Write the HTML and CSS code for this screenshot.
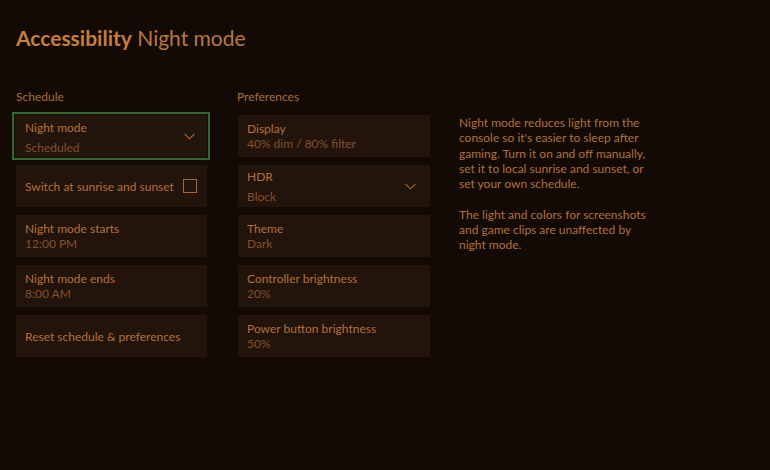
FILE: index.html
```html
<!DOCTYPE html>
<html lang="en">
<head>
<meta charset="utf-8">
<title>Accessibility Night mode</title>
<link rel="stylesheet" href="styles.css">
</head>
<body>
<div class="page">
  <h1 class="title"><span class="title-strong">Accessibility</span> Night mode</h1>
  <div class="main">
    <section class="col">
      <div class="label">Schedule</div>
      <div class="cards">
        <div class="card drop focused">
          <div class="texts">
            <div class="t">Night mode</div>
            <div class="s">Scheduled</div>
          </div>
          <svg class="chev" width="11" height="7" viewBox="0 0 11 7"><polyline points="0.5,0.8 5.5,5.8 10.5,0.8" fill="none" stroke="#a86a38" stroke-width="1.1"/></svg>
        </div>
        <div class="card row">
          <div class="t">Switch at sunrise and sunset</div>
          <span class="check"></span>
        </div>
        <div class="card">
          <div class="t">Night mode starts</div>
          <div class="s">12:00 PM</div>
        </div>
        <div class="card">
          <div class="t">Night mode ends</div>
          <div class="s">8:00 AM</div>
        </div>
        <div class="card row">
          <div class="t">Reset schedule &amp; preferences</div>
        </div>
      </div>
    </section>
    <section class="col col2">
      <div class="label">Preferences</div>
      <div class="cards">
        <div class="card">
          <div class="t">Display</div>
          <div class="s">40% dim / 80% filter</div>
        </div>
        <div class="card drop">
          <div class="texts">
            <div class="t">HDR</div>
            <div class="s">Block</div>
          </div>
          <svg class="chev" width="11" height="7" viewBox="0 0 11 7"><polyline points="0.5,0.8 5.5,5.8 10.5,0.8" fill="none" stroke="#a86a38" stroke-width="1.1"/></svg>
        </div>
        <div class="card">
          <div class="t">Theme</div>
          <div class="s">Dark</div>
        </div>
        <div class="card">
          <div class="t">Controller brightness</div>
          <div class="s">20%</div>
        </div>
        <div class="card">
          <div class="t">Power button brightness</div>
          <div class="s">50%</div>
        </div>
      </div>
    </section>
    <section class="desc">
      <p>Night mode reduces light from the console so it's easier to sleep after gaming. Turn it on and off manually, set it to local sunrise and sunset, or set your own schedule.</p>
      <p>The light and colors for screenshots and game clips are unaffected by night mode.</p>
    </section>
  </div>
</div>
</body>
</html>
```

FILE: styles.css
```css
html, body {
  margin: 0;
  padding: 0;
  background: #130a05;
  width: 770px;
  height: 470px;
  overflow: hidden;
}
body {
  font-family: Lato, "Noto Sans", sans-serif;
  color: #b2713d;
}
.page {
  padding: 26px 0 0 16px;
}
.title {
  margin: 0;
  font-size: 21px;
  line-height: 24px;
  font-weight: 400;
  color: #b87842;
}
.title-strong {
  font-weight: 700;
  color: #c67e3e;
}
.main {
  display: flex;
  margin-top: 39px;
}
.col {
  width: 191px;
  display: flex;
  flex-direction: column;
}
.col2 {
  margin-left: 31px;
  width: 192px;
}
.label {
  font-size: 12px;
  line-height: 16px;
  color: #a96b3a;
  height: 16px;
  margin-bottom: 10px;
}
.col2 .label { margin-left: -1px; }
.cards {
  display: flex;
  flex-direction: column;
  gap: 8px;
}
.card {
  box-sizing: border-box;
  height: 42px;
  background: #22140a;
  padding: 6px 9px 0;
  font-size: 12px;
  line-height: 15px;
}
.t {
  color: #b3703c;
  white-space: nowrap;
}
.s {
  color: #82512c;
  white-space: nowrap;
}
.card.drop {
  display: flex;
  align-items: center;
  justify-content: space-between;
  padding: 0 14px 0 9px;
}
.card.drop .texts {
  display: flex;
  flex-direction: column;
  gap: 5px;
  padding-top: 1px;
}
.card.focused {
  height: 48px;
  margin: -3px -3px -3px -4px;
  border: 2px solid #2f6a33;
  box-shadow: inset 0 0 0 1px #150c06;
  padding: 0 13px 0 11px;
  background: #23150b;
}
.card.focused .texts { gap: 5px; padding-top: 2px; }
.card.row {
  display: flex;
  align-items: center;
  justify-content: space-between;
  padding: 0 10px 0 9px;
}
.check {
  flex: none;
  width: 12px;
  height: 12px;
  border: 1px solid #a06637;
}
.chev { display: block; flex: none; }
.desc {
  margin-left: 29px;
  margin-top: 26px;
  width: 192px;
  font-size: 12px;
  line-height: 15.3px;
  color: #b2713d;
}
.desc p {
  margin: 0 0 15.3px;
}
```
